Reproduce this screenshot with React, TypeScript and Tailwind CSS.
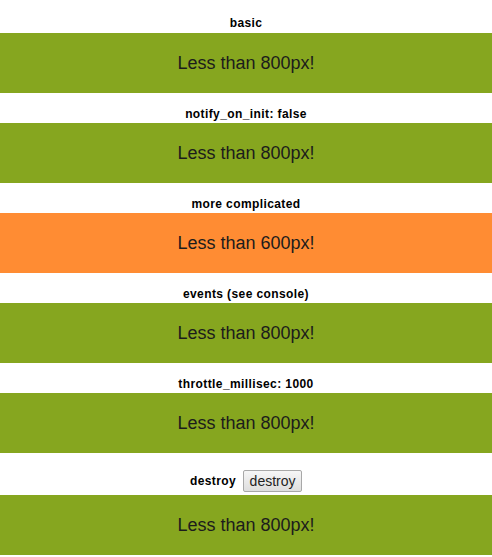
const bars = [
  { title: 'basic', text: 'Less than 800px!', color: 'bg-[#86a61f]', first: true },
  { title: 'notify_on_init: false', text: 'Less than 800px!', color: 'bg-[#86a61f]' },
  { title: 'more complicated', text: 'Less than 600px!', color: 'bg-[#ff8c33]' },
  { title: 'events (see console)', text: 'Less than 800px!', color: 'bg-[#86a61f]' },
  { title: 'throttle_millisec: 1000', text: 'Less than 800px!', color: 'bg-[#86a61f]' },
];

function Bar({ text, color }: { text: string; color: string }) {
  return (
    <div className={`flex h-[60px] items-center justify-center ${color}`}>
      <span className="text-[18px] leading-none text-[#1c1c1c]">{text}</span>
    </div>
  );
}

export default function App() {
  return (
    <div className="w-[492px] bg-white font-['Liberation_Sans',Arial,sans-serif]">
      {bars.map((b) => (
        <div key={b.title}>
          <div
            className={`text-center text-[12px] font-bold leading-[12px] tracking-[0.4px] text-black ${
              b.first ? 'h-[33px] pt-[17px]' : 'h-[30px] pt-[15px]'
            }`}
          >
            {b.title}
          </div>
          <Bar text={b.text} color={b.color} />
        </div>
      ))}
      <div className="flex h-[42px] items-end justify-center pb-[3px]">
        <div className="flex items-center gap-[7px]">
          <span className="text-[12px] font-bold leading-[12px] tracking-[0.4px] text-black">destroy</span>
          <button className="h-[22px] w-[59px] rounded-[2px] border border-[#a8a8a8] bg-gradient-to-b from-[#f6f6f6] to-[#dedede] text-[14px] leading-none text-[#222]">
            destroy
          </button>
        </div>
      </div>
      <Bar text="Less than 800px!" color="bg-[#86a61f]" />
    </div>
  );
}
